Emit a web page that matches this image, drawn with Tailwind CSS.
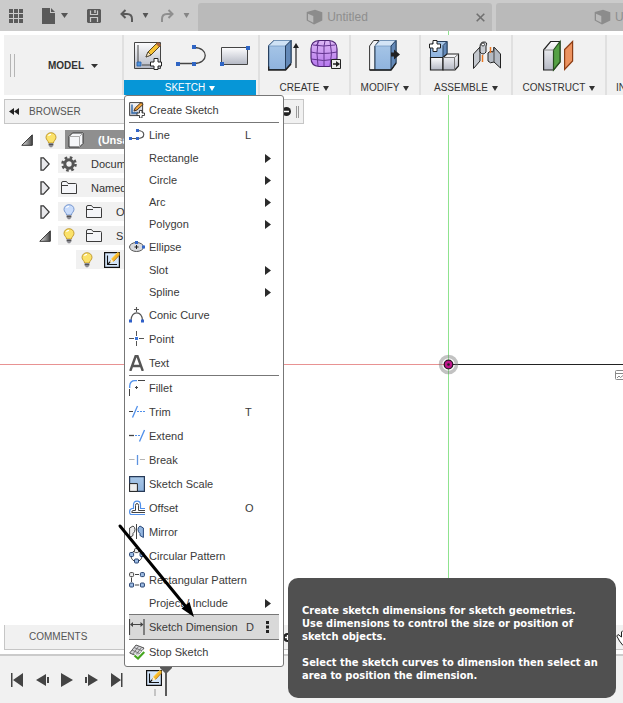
<!DOCTYPE html>
<html lang="en">
<head>
<meta charset="utf-8">
<title>Untitled</title>
<script src="https://cdn.jsdelivr.net/npm/@tailwindcss/browser@4"></script>
</head>
<body class="relative flex min-h-screen flex-col overflow-hidden bg-white font-['Liberation_Sans',Arial,sans-serif] text-[11px] leading-4 text-[#333]">

<!-- Shared symbols and gradients -->
<svg class="absolute size-0" aria-hidden="true">
  <defs>
    <linearGradient id="silver" x1="0" y1="0" x2="0" y2="1"><stop offset="0" stop-color="#fdfdfe"/><stop offset="1" stop-color="#b4b8c4"/></linearGradient>
    <linearGradient id="blue" x1="0" y1="0" x2="0" y2="1"><stop offset="0" stop-color="#a9c8e8"/><stop offset="1" stop-color="#8fb3de"/></linearGradient>
    <linearGradient id="purple" x1="0" y1="0" x2="0" y2="1"><stop offset="0" stop-color="#dcb6f4"/><stop offset="1" stop-color="#b678ee"/></linearGradient>
    <linearGradient id="dark" x1="0" y1="0" x2="1" y2="0"><stop offset="0" stop-color="#eee"/><stop offset="1" stop-color="#444"/></linearGradient>
    <symbol id="bulb" viewBox="0 0 12 16"><path d="M6 .7C3 .7 1 2.8 1 5.4c0 2.5 2.400 3.300 2.600 5.600h4.800C8.600 8.700 11 7.900 11 5.400 11 2.800 9 .7 6 .7z" fill="#fbe26a" stroke="#b58a1c" stroke-width=".8"/><path d="M3.500 3.800C4 2.700 5 2.300 6 2.300" stroke="#fff" stroke-width="1.300" fill="none"/><path d="M3.700 11h4.600v2.600L7 15.300H5L3.700 13.600z" fill="#8b8b92"/><path d="M3.700 12.500h4.600" stroke="#444" stroke-width=".8"/></symbol>
    <symbol id="bulb-off" viewBox="0 0 12 16"><path d="M6 .7C3 .7 1 2.800 1 5.400c0 2.500 2.400 3.300 2.600 5.600h4.800C8.600 8.700 11 7.900 11 5.400 11 2.800 9 .7 6 .7z" fill="#c9dcfb" stroke="#6d8fc9" stroke-width=".9"/><path d="M3.500 3.800C4 2.700 5 2.300 6 2.300" stroke="#fff" stroke-width="1.300" fill="none"/><path d="M3.700 11h4.600v2.600L7 15.300H5L3.700 13.600z" fill="#8b8b92"/><path d="M3.700 12.500h4.600" stroke="#444" stroke-width=".8"/></symbol>
    <symbol id="folder" viewBox="0 0 16 13"><path d="M.5 12.500V2Q.5 .5 2 .5h3.500L7 2.500h7.500q1 0 1 1v9z" fill="#f4f5f8" stroke="#3b3b3b"/><path d="M1 4.500h6" stroke="#3b3b3b"/></symbol>
    <symbol id="tabcube" viewBox="0 0 17 16"><path d="M.7 3 9 .7l7.300 2.600v8.200L8 15.500.7 11.500z" fill="#8c8c8c"/><path d="M2 4.700 7.300 7v6.700L2 11z" fill="#bababa"/></symbol>
    <symbol id="tri-right" viewBox="0 0 10 14"><path d="M1 .8h2.500L9.200 7l-5.700 6.200H1z" fill="#e9e9ec" stroke="#3a3a3a" stroke-width="1.300"/></symbol>
    <symbol id="tri-open" viewBox="0 0 12 12"><path d="M11.300.8v10.500H.8z" fill="url(#dark)" stroke="#333"/></symbol>
    <symbol id="mini-sketch" viewBox="0 0 16 16"><path d="M.6.600h14.800v14.800H.6z" fill="#d4e6fb" stroke="#111" stroke-width="1.200"/><path d="M3.500 3.500v9H13M3.500 12.500l4-4" fill="none" stroke="#111" stroke-width="1.100"/><path d="m6 10.500 1.300-3.500L13.500.5h2V3L9.500 9.500z" fill="#f7b92a"/><path d="m7.300 7 6.200-6.500" stroke="#fbdc7c"/><path d="M9.500 9.500 15.500 3" stroke="#a8701a" stroke-width=".8"/><path d="m6 10.500 1.300-3.500 2.200 2.500z" fill="#fff3d0"/></symbol>
    <symbol id="caret" viewBox="0 0 6 5"><path d="M0 0h6L3 5z" fill="currentColor"/></symbol>
    <symbol id="sub" viewBox="0 0 6 9"><path d="M0 0 6 4.500 0 9z" fill="#2b2b2b"/></symbol>
  </defs>
</svg>

<!-- Drawing canvas -->
<div class="absolute inset-x-0 top-[31px] bottom-[50px]" aria-hidden="true">
  <div class="absolute inset-y-0 left-[448px] w-px bg-[#8fe38f]"></div>
  <div class="absolute left-0 top-[333px] h-px w-[448px] bg-[#e89292]"></div>
  <div class="absolute left-[448px] right-0 top-[333px] h-px bg-[#222]"></div>
  <svg class="absolute left-[438px] top-[323px] size-[21px]" viewBox="0 0 21 21"><circle cx="10.500" cy="10.500" r="8" fill="none" stroke="#777" stroke-opacity=".45" stroke-width="3.500"/><circle cx="10.500" cy="10.500" r="4.300" fill="#c0168c" stroke="#2a1525" stroke-width="1.300"/><circle cx="10.500" cy="10.500" r="1.300" fill="#222"/></svg>
  <svg class="absolute right-0 top-[339px] h-[10px] w-[8px]" viewBox="0 0 8 10" fill="none" stroke="#888"><path d="M8 .5H1.500Q.5 .5 .5 1.500v7q0 1 1 1H8M1 3.500h7M2 8l2-2 1.500 1.500L8 5.500"/></svg>
</div>

<!-- Quick access bar and document tabs -->
<header class="relative flex h-[31px] shrink-0 items-end bg-[#cbcbcb] text-[#555]">
  <div class="flex h-full w-[198px] shrink-0 items-center pl-[9px]">
    <button aria-label="Data panel"><svg class="block h-[14px] w-[14px]" viewBox="0 0 14 14" fill="#5a5a5a"><path d="M0 0h4v4H0zM5 0h4v4H5zM10 0h4v4h-4zM0 5h4v4H0zM5 5h4v4H5zM10 5h4v4h-4zM0 10h4v4H0zM5 10h4v4H5zM10 10h4v4h-4z"/></svg></button>
    <button class="ml-[19px] flex items-center gap-[6px]" aria-label="File"><svg class="h-[16px] w-[13px]" viewBox="0 0 13 16" fill="#5a5a5a"><path d="M0 0h8v5h5v11H0zM9 0l4 4H9z"/></svg><svg class="h-[5px] w-[7px]" viewBox="0 0 6 5" preserveAspectRatio="none"><use href="#caret"/></svg></button>
    <button class="ml-[19px]" aria-label="Save"><svg class="block size-[14px]" viewBox="0 0 14 14"><path d="M1 0h12l1 1v12l-1 1H1l-1-1V1z" fill="#5a5a5a"/><path d="M3.500 1.500v4h7v-4M3.500 13V8.500h7V13" fill="none" stroke="#cbcbcb" stroke-width="1.200"/><path d="M8 1v3" stroke="#cbcbcb" stroke-width="1.500"/></svg></button>
    <button class="ml-[19px] flex items-center gap-[9px]" aria-label="Undo"><svg class="h-[14px] w-[13px]" viewBox="0 0 13 14" fill="none" stroke="#5a5a5a" stroke-width="2"><path d="M5.500 1 1.500 5l4 4M2 5h5q5 0 5 5v3"/></svg><svg class="h-[5px] w-[7px]" viewBox="0 0 6 5"><use href="#caret"/></svg></button>
    <button class="ml-[12px] flex items-center gap-[9px] text-[#858585]" aria-label="Redo"><svg class="h-[14px] w-[13px]" viewBox="0 0 13 14" fill="none" stroke="#8f8f8f" stroke-width="2"><path d="m7.500 1 4 4-4 4M11 5H6q-5 0-5 5v3"/></svg><svg class="h-[5px] w-[7px]" viewBox="0 0 6 5"><use href="#caret"/></svg></button>
  </div>
  <div class="relative flex h-[28px] w-[294px] shrink-0 items-center justify-center gap-1 rounded-t-[3px] bg-[#bababa] pr-4 text-[12px] text-[#8e8e8e]">
    <svg class="h-4 w-[17px]"><use href="#tabcube"/></svg><span>Untitled</span>
    <button class="absolute right-[7px]" aria-label="Close tab"><svg class="block size-[9px]" viewBox="0 0 9 9" stroke="#707070" stroke-width="1.600"><path d="m.7.7 7.600 7.600M8.300.7.7 8.300"/></svg></button>
  </div>
  <div class="ml-1 flex h-[28px] min-w-0 grow items-center gap-1 overflow-hidden rounded-tl-[3px] bg-[#bababa] pl-[98px] text-[12px] text-[#8e8e8e]">
    <svg class="h-4 w-[17px] shrink-0"><use href="#tabcube"/></svg><span>Untitled</span>
  </div>
</header>

<!-- Ribbon -->
<nav class="relative z-20 mt-1 ml-1 flex h-[60px] shrink-0 bg-[#f1f1f1] text-[10px]">
  <div class="flex w-[118px] shrink-0 items-center pl-[6px]">
    <div class="h-[23px] w-[5px] border-x border-[#b5b5b5]"></div>
    <button class="ml-[33px] flex items-center gap-[7px] pt-[2px] font-bold">MODEL <svg class="h-[4px] w-[7px]" viewBox="0 0 6 5" preserveAspectRatio="none"><use href="#caret"/></svg></button>
  </div>
  <div class="relative flex w-[136px] shrink-0 flex-col border-l-2 border-[#e0e0e0]">
    <div class="flex h-[45px] items-start gap-[12px] pt-[5px] pl-[9px]">
      <button aria-label="Create Sketch"><svg class="block h-[32px] w-[30px]" viewBox="133 40 30 32"><path d="M134.500 42.500h26v26h-26z" fill="url(#silver)" stroke="#444"/><path d="M138 45v17M142 65h9" stroke="#444"/><path d="M137 62h4v4h-4z" fill="#4f93da" stroke="#245ca8" stroke-width=".8"/><path d="m146 57 2-5 9.500-9.500 3 3L151 55z" fill="#f6c235" stroke="#4a3510" stroke-width=".9"/><path d="m146 57 2-5 3 3z" fill="#ffe9bd" stroke="#333" stroke-width=".7"/><path d="m156 44 1.500-1.500q3-.5 3 3L159 47z" fill="#a9643c"/><path d="M154 58.500h4v3.500h3.500v4H158v3.500h-4V66h-3.500v-4h3.500z" fill="#fff" stroke="#222"/></svg></button>
      <button aria-label="Line"><svg class="block h-[32px] w-[32px]" viewBox="175 40 32 32"><path d="M194 47.500c15 0 15 16 0 16h-16" fill="none" stroke="#444" stroke-width="1.300"/><path d="M176 62h4v4h-4zM192 62h4v4h-4zM192 45h4v4h-4z" fill="#2f65c4"/></svg></button>
      <button aria-label="Rectangle"><svg class="block h-[32px] w-[31px]" viewBox="218 40 31 32"><path d="M220.500 47.500h26v17h-26z" fill="url(#silver)" stroke="#444"/><path d="M245 46h4v4h-4zM219 62h4v4h-4z" fill="#2f65c4"/></svg></button>
    </div>
    <button class="flex h-[15px] w-[132px] items-center justify-center gap-1 bg-[#0696d7] pt-px text-white" aria-haspopup="menu" aria-expanded="true">SKETCH <svg class="h-[5px] w-[6px]"><use href="#caret"/></svg></button>

    <!-- Sketch menu -->
    <div role="menu" class="absolute top-[60px] left-0 w-[160px] rounded-[3px] border border-[#777] bg-white px-1 py-[2px] text-[11px] text-[#3a3a3a] [&>button]:flex [&>button]:w-full [&>button]:items-center [&>button]:gap-1 [&>button]:text-left [&_span]:grow [&_kbd]:w-[34px] [&_kbd]:font-['Liberation_Sans']">
      <button role="menuitem" class="h-6"><svg class="size-4" viewBox="0 0 16 16"><path d="M.6.6h13v13H.6z" fill="url(#silver)" stroke="#444"/><path d="M3 2.500V11h6" fill="none" stroke="#2e67a8" stroke-width="1.400"/><path d="m5 9 1.200-3L12 .5 14 2.500 8 8z" fill="#f2a53a" stroke="#3b2412" stroke-width=".9"/><path d="M10.500 8.500h2.500V11h2.500v2.500H13V16h-2.500v-2.500H8V11h2.500z" fill="#fff" stroke="#333" stroke-width=".9"/></svg><span>Create Sketch</span></button>
      <hr class="m-0 w-[150px] border-[#777]">
      <button role="menuitem" class="h-6"><svg class="size-4" viewBox="0 0 16 16"><path d="M8 3.500c9 0 9 8 0 8H2" fill="none" stroke="#555" stroke-width="1.200"/><path d="M0 10h3v3H0zM7 10h3v3H7zM7 2h3v3H7z" fill="#3366c8"/></svg><span>Line</span><kbd>L</kbd></button>
      <button role="menuitem" class="h-[22px] pl-5 pr-2"><span>Rectangle</span><svg class="h-[9px] w-[6px]"><use href="#sub"/></svg></button>
      <button role="menuitem" class="h-[22px] pl-5 pr-2"><span>Circle</span><svg class="h-[9px] w-[6px]"><use href="#sub"/></svg></button>
      <button role="menuitem" class="h-[22px] pl-5 pr-2"><span>Arc</span><svg class="h-[9px] w-[6px]"><use href="#sub"/></svg></button>
      <button role="menuitem" class="h-[22px] pl-5 pr-2"><span>Polygon</span><svg class="h-[9px] w-[6px]"><use href="#sub"/></svg></button>
      <button role="menuitem" class="h-6"><svg class="size-4" viewBox="0 0 16 16"><ellipse cx="7.500" cy="8" rx="7" ry="4.500" fill="#d9dade" stroke="#555"/><path d="M5.500 8h4M7.500 6v4" stroke="#222"/><path d="M6 2h3v3H6zM13 6.500h3v3h-3z" fill="#3366c8"/></svg><span>Ellipse</span></button>
      <button role="menuitem" class="h-[22px] pl-5 pr-2"><span>Slot</span><svg class="h-[9px] w-[6px]"><use href="#sub"/></svg></button>
      <button role="menuitem" class="h-[22px] pl-5 pr-2"><span>Spline</span><svg class="h-[9px] w-[6px]"><use href="#sub"/></svg></button>
      <button role="menuitem" class="h-6"><svg class="size-4" viewBox="0 0 16 16"><path d="M2 13C3 3.500 12.500 3.500 13.500 13M5 2.500h5M7.500 0v5" fill="none" stroke="#555" stroke-width="1.100"/><path d="M0 12.500h3v3H0zM12 12.500h3v3h-3z" fill="#2f5fc8"/></svg><span>Conic Curve</span></button>
      <button role="menuitem" class="h-6"><svg class="size-4" viewBox="0 0 16 16"><path d="M0 7.500h5M10 7.500h5M7.500 0v5M7.500 10v5" stroke="#555"/><path d="M6 6h3v3H6z" fill="#3b74d8"/></svg><span>Point</span></button>
      <button role="menuitem" class="h-6"><svg class="size-4" viewBox="0 0 16 16" fill="none" stroke="#555" stroke-width="2.400"><path d="M1.300 16 6.600 1.300h1.900L13.800 16M3.500 11h8"/></svg><span>Text</span></button>
      <hr class="m-0 w-[150px] border-[#777]">
      <button role="menuitem" class="h-6"><svg class="size-4" viewBox="0 0 16 16" fill="none"><path d="M.7 8V6Q1 .7 6 .7h2" stroke="#4f8fea" stroke-width="1.300"/><path d="M9 .5h7M.5 9v7" stroke="#444"/><path d="M6 7.500h3M7.500 6v3" stroke="#444"/></svg><span>Fillet</span></button>
      <button role="menuitem" class="h-6"><svg class="size-4" viewBox="0 0 16 16"><path d="M0 7.500h4" stroke="#444"/><path d="M3.500 13.500 8.500 2" stroke="#4f8fea" stroke-width="1.300"/><path d="M8 7.500h8" stroke="#4f8fea" stroke-dasharray="2 1"/></svg><span>Trim</span><kbd>T</kbd></button>
      <button role="menuitem" class="h-6"><svg class="size-4" viewBox="0 0 16 16"><path d="M0 7.500h5" stroke="#444" stroke-width="1.300"/><path d="M6 7.500h5" stroke="#4f8fea" stroke-dasharray="2 1"/><path d="M10.500 13.500 15.500 2" stroke="#4f8fea" stroke-width="1.300"/></svg><span>Extend</span></button>
      <button role="menuitem" class="h-6"><svg class="size-4" viewBox="0 0 16 16"><path d="M0 7.500h5.500M11 7.500h5" stroke="#b5b5b5"/><path d="M8.500 3v10" stroke="#5d93e0" stroke-width="1.300"/></svg><span>Break</span></button>
      <button role="menuitem" class="h-6"><svg class="size-4" viewBox="0 0 16 16"><path d="M.6.600h14.800v14.800H.6z" fill="url(#blue)" stroke="#263957" stroke-width="1.200"/><path d="M.6 7.600h7.800v7.800H.6z" fill="#eee" stroke="#222"/></svg><span>Sketch Scale</span></button>
      <button role="menuitem" class="h-6"><svg class="size-4" viewBox="0 0 16 16" fill="none"><path d="M16 14.500H2.500Q.6 14.500 .6 12 .6 9 3 8.500h1.500V5Q4.500 1.200 8 1.200T11.500 5v3.500H16" stroke="#4f8fea" stroke-width="1.200"/><path d="M16 10.500H9.500V5.500Q9.500 3.500 8 3.500T6.500 5.500v5H4Q2.800 10.500 2.800 12.500H16" stroke="#444"/></svg><span>Offset</span><kbd>O</kbd></button>
      <button role="menuitem" class="h-6"><svg class="size-4" viewBox="0 0 16 16"><path d="M.6 13.500V4L4 2q2 1 2 3.500T4 9.500v2z" fill="#eee" stroke="#444"/><path d="M14.400 13.500V4L11 2q-2 1-2 3.500t2 4v2z" fill="#94b6df" stroke="#28487a"/><path d="M7.500 0v15" stroke="#444"/></svg><span>Mirror</span></button>
      <button role="menuitem" class="h-6"><svg class="size-4" viewBox="0 0 16 16"><circle cx="7.500" cy="8" r="5.500" fill="none" stroke="#444"/><g stroke="#25406f"><rect x="5.500" y=".6" width="4" height="4" rx="1" fill="#eee" stroke="#444"/><rect x=".6" y="4.500" width="4" height="4" rx="1" fill="#9dbce4"/><rect x="11" y="4.500" width="4" height="4" rx="1" fill="#9dbce4"/><rect x="5.500" y="11" width="4" height="4" rx="1" fill="#9dbce4"/></g></svg><span>Circular Pattern</span></button>
      <button role="menuitem" class="h-6"><svg class="size-4" viewBox="0 0 16 16"><path d="M6 2.500h4M6 13h4M2.500 5.500v4.500" stroke="#444"/><g stroke="#25406f" fill="#9dbce4"><rect x=".6" y=".6" width="4" height="4" rx="1" fill="#eee" stroke="#444"/><rect x="11.400" y=".6" width="4" height="4" rx="1"/><rect x=".6" y="11" width="4" height="4" rx="1"/><rect x="11.400" y="11" width="4" height="4" rx="1"/></g></svg><span>Rectangular Pattern</span></button>
      <button role="menuitem" class="h-[22px] pl-5 pr-2"><span>Project / Include</span><svg class="h-[9px] w-[6px]"><use href="#sub"/></svg></button>
      <button role="menuitem" class="h-[26px] border-y border-[#777] bg-[#d9d9d9]"><svg class="size-4" viewBox="0 0 16 16"><path d="M.5 0v16M15 0v16" stroke="#444" stroke-width="1.200"/><path d="M2 5.500h12" stroke="#444"/><path d="M1 5.500 4 3v5zM14.500 5.500l-3-2.500v5z" fill="#444"/></svg><span>Sketch Dimension</span><b class="w-4 font-normal">D</b><svg class="mr-[10px] h-3 w-[3px]" viewBox="0 0 3 12" fill="#222"><path d="M0 0h3v3H0zM0 4.500h3v3H0zM0 9h3v3H0z"/></svg></button>
      <button role="menuitem" class="h-6"><svg class="size-4" viewBox="0 0 16 16"><path d="M.7 9 7 1l8 3-6 8.500z" fill="#d6d6da" stroke="#555"/><path d="m3 6 8.500 4M5 3.500l8.500 3.500M3.500 10.500l6-8M6.500 11.500l6-8" stroke="#666" stroke-width=".8"/><path d="m5.500 11 3.500 3.500L15.300 7" fill="none" stroke="#fff" stroke-width="3.500"/><path d="m5.500 11.500 3.500 3L15.300 8" fill="none" stroke="#45a51e" stroke-width="2.200"/></svg><span>Stop Sketch</span></button>
    </div>
  </div>
  <div class="flex w-[91px] shrink-0 flex-col items-center border-l-2 border-[#e0e0e0]">
    <div class="flex h-[45px] items-start gap-2 pt-[3px]">
      <button aria-label="Extrude"><svg class="block h-[34px] w-[34px]" viewBox="268 38 34 34"><path d="m268.600 46 5.500-5.500H291v22.500l-5.500 6.500h-16.900z" fill="url(#blue)" stroke="#27405f" stroke-width="1.200"/><path d="m268.600 46 5.500-5.500H291l-5.500 5.500z" fill="#cfe2f5" stroke="#6e93bb" stroke-width=".7"/><path d="M285.500 46 291 40.500v22.500l-5.500 6.500z" fill="#6389b8" stroke="#27405f"/><path d="M268.600 66.500v3.500h17l5.400-6" fill="none" stroke="#222" stroke-width="1.400"/><path d="M296 68V46" stroke="#222" stroke-width="1.200"/><path d="m293 48 3-5 3 5z" fill="#222"/></svg></button>
      <button aria-label="Create Form"><svg class="block h-[34px] w-[32px]" viewBox="310 38 32 34"><path d="M311 49q0-8 8-8.500h10q8 .5 8 8.500v9q0 8-8 8.500h-10q-8-.5-8-8.500z" fill="url(#purple)" stroke="#4d2474" stroke-width="1.200"/><path d="M318 41q-2 13 0 25M324 46v20M330 41q3 12 0 25M311 52q11 3 26 0M311 59q12 3 26 0M313 45q10 2 22 0M319 41l-3 5M325 41l-1 5" fill="none" stroke="#63348f"/><path d="M331.500 59.500h9v9h-9z" fill="#eee" stroke="#222"/><path d="M333 64h4" stroke="#222" stroke-width="1.500"/><path d="m336 61 4 3-4 3z" fill="#222"/></svg></button>
    </div>
    <button class="flex h-[15px] items-center gap-1 pt-px">CREATE <svg class="h-[5px] w-[6px]"><use href="#caret"/></svg></button>
  </div>
  <div class="flex w-[70px] shrink-0 flex-col items-center border-l-2 border-[#e0e0e0]">
    <button class="flex h-[45px] items-start pt-[3px]" aria-label="Press Pull"><svg class="block h-[34px] w-[34px]" viewBox="369 38 34 34"><path d="m370.600 46 4-5.500H380l-4 5.500v24h-5.400z" fill="#f2f3f5" stroke="#333"/><path d="m376 46 5-5.500h16V63l-5 7h-16z" fill="url(#blue)" stroke="#27405f"/><path d="m376 46 5-5.500h16l-5 5.500z" fill="#d3e4f6" stroke="#6e93bb" stroke-width=".7"/><path d="m392 46 5-5.500V63l-5 7z" fill="#6389b8" stroke="#27405f"/><path d="M370.600 70h21.500l5-7" fill="none" stroke="#222" stroke-width="1.300"/><path d="M392 52.500h3v-3l6 5-6 5v-3h-3z" fill="#222"/></svg></button>
    <button class="flex h-[15px] items-center gap-1 pt-px">MODIFY <svg class="h-[5px] w-[6px]"><use href="#caret"/></svg></button>
  </div>
  <div class="flex w-[92px] shrink-0 flex-col items-center border-l-2 border-[#e0e0e0]">
    <div class="flex h-[45px] items-start gap-3 pt-[3px]">
      <button aria-label="New Component"><svg class="block h-[34px] w-[31px]" viewBox="428 38 31 34"><path d="M429.500 45.500 433 41.500h13V53l-4 4.500h-12.500z" fill="url(#blue)" stroke="#27405f"/><path d="m442 45.500 4-4V54l-4 3.500z" fill="#6389b8" stroke="#27405f"/><path d="M429.500 57.500H442V70h-12.500z" fill="url(#silver)" stroke="#222" stroke-width="1.200"/><path d="m442 57.500 4-3.500h11.500v12l-3.500 4h-12z" fill="url(#silver)" stroke="#222" stroke-width="1.200"/><path d="M442 57.500h11.500l4-3.500M453.500 57.500V70" fill="none" stroke="#777"/><path d="M432 40.500h4V44h3.500v4H436v3.500h-4V48h-3.500v-4h3.500z" fill="#fff" stroke="#222"/></svg></button>
      <button aria-label="Joint"><svg class="block h-[34px] w-[31px]" viewBox="472 38 31 34"><path d="M473.500 54 480 47v14l-6.500 7.500z" fill="#c4c8ce" stroke="#222"/><path d="M480 47q0-5 4-5t2 4v6q-3 4-6 0z" fill="#c9cdd3" stroke="#222"/><circle cx="483" cy="44.500" r="1.500" fill="#fff" stroke="#222" stroke-width=".8"/><path d="M482.500 55v7" stroke="#e87722" stroke-width="1.500"/><path d="M488 53q2-3 5-1l1-5 6.500 7v14l-6.500-6q-4 2-6-1z" fill="#b4bac3" stroke="#222"/><path d="M494 47v15" stroke="#444"/><path d="M490.500 47v6" stroke="#e87722" stroke-width="1.500"/></svg></button>
    </div>
    <button class="flex h-[15px] items-center gap-1 pt-px">ASSEMBLE <svg class="h-[5px] w-[6px]"><use href="#caret"/></svg></button>
  </div>
  <div class="flex w-[94px] shrink-0 flex-col items-center border-l-2 border-[#e0e0e0]">
    <button class="flex h-[45px] items-start pt-[3px]" aria-label="Offset Plane"><svg class="block h-[34px] w-[32px]" viewBox="543 38 32 34"><path d="m543.600 50 7-8.500H560V62l-6.500 8h-9.900z" fill="url(#silver)" stroke="#222" stroke-width="1.200"/><path d="m553.500 50 6.500-8.500V62l-6.500 8z" fill="#55a145" stroke="#264f1e" stroke-width="1.200"/><path d="M543.600 50h9.900" stroke="#888"/><path d="m564.600 49.500 8-8V61l-8 8.500z" fill="#ec9360" stroke="#8c3c14" stroke-width="1.200"/></svg></button>
    <button class="flex h-[15px] items-center gap-1 pt-px">CONSTRUCT <svg class="h-[5px] w-[6px]"><use href="#caret"/></svg></button>
  </div>
  <div class="flex min-w-0 grow flex-col overflow-hidden border-l-2 border-[#e0e0e0] pl-[9px]">
    <div class="h-[45px]"></div>
    <button class="flex h-[15px] items-center pt-px">INSPECT</button>
  </div>
</nav>

<!-- Browser panel -->
<main class="relative mt-1 grow pl-1">
  <div class="flex h-[25px] w-[300px] items-center border border-[#c6c6c6] bg-[#f1f1f1] px-1 text-[10px] text-[#555]">
    <svg class="h-[7px] w-[10px]" viewBox="0 0 10 7" fill="#222"><path d="M5 0v7L0 3.500zM10 0v7L5 3.500z"/></svg>
    <h2 class="ml-[10px] grow">BROWSER</h2>
    <svg class="mr-[5px] size-[9px]" viewBox="0 0 9 9"><circle cx="4.500" cy="4.500" r="4.500" fill="#222"/><path d="M2 4.500h5" stroke="#fff" stroke-width="1.500"/></svg>
    <div class="h-3 w-[3px] border-x border-[#999]"></div>
  </div>
  <ul class="mt-[6px] flex w-[121px] flex-col gap-[5px] whitespace-nowrap [&_svg]:shrink-0 [&>li]:flex [&>li]:h-[19px] [&>li]:items-center [&_div]:flex [&_div]:h-full [&_div]:min-w-0 [&_div]:grow [&_div]:items-center [&_div]:bg-[#f1f1f1]">
    <li class="pl-[17px]"><svg class="mr-[7px] size-3"><use href="#tri-open"/></svg><div class="pl-[5px]"><svg class="mr-[8px] h-4 w-3"><use href="#bulb"/></svg><div class="!bg-[#8f8f8f] pl-[3px] font-bold text-white"><svg class="mr-[14px] size-4" viewBox="0 0 16 16"><path d="M1 4.500 4.500 1H15v10.500L11.500 15H1z" fill="#f5f6f8" stroke="#333" stroke-linejoin="round"/><path d="M1 4.500h10.500L15 1M11.500 4.500V15" fill="none" stroke="#aaa"/></svg>(Unsa</div></div></li>
    <li class="pl-9"><svg class="mr-2 h-[14px] w-[10px]"><use href="#tri-right"/></svg><div class="pl-[3px]"><svg class="mr-[14px] size-4" viewBox="0 0 16 16"><circle cx="8" cy="8" r="4.200" fill="none" stroke="#555" stroke-width="3"/><circle cx="8" cy="8" r="6.500" fill="none" stroke="#555" stroke-width="2.600" stroke-dasharray="2.600 2.500"/></svg>Docum</div></li>
    <li class="pl-9"><svg class="mr-2 h-[14px] w-[10px]"><use href="#tri-right"/></svg><div class="pl-[3px]"><svg class="mr-[14px] h-[13px] w-4"><use href="#folder"/></svg>Named</div></li>
    <li class="pl-9"><svg class="mr-2 h-[14px] w-[10px]"><use href="#tri-right"/></svg><div class="pl-[5px]"><svg class="mr-[11px] h-4 w-3"><use href="#bulb-off"/></svg><svg class="mr-[14px] h-[13px] w-4"><use href="#folder"/></svg>O</div></li>
    <li class="pl-[35px]"><svg class="mr-[7px] size-3"><use href="#tri-open"/></svg><div class="pl-[5px]"><svg class="mr-[11px] h-4 w-3"><use href="#bulb"/></svg><svg class="mr-[14px] h-[13px] w-4"><use href="#folder"/></svg>S</div></li>
    <li class="pl-[72px]"><div class="pl-[5px]"><svg class="mr-[11px] h-4 w-3"><use href="#bulb"/></svg><svg class="size-4"><use href="#mini-sketch"/></svg></div></li>
  </ul>
</main>

<!-- Comments and navigation bars -->
<div class="relative flex h-[25px] shrink-0 justify-between pl-1 text-[10px] text-[#555]">
  <div class="flex w-[300px] items-center border-b border-l border-[#c6c6c6] bg-[#f1f1f1] pl-6">
    <h2 class="grow">COMMENTS</h2>
    <svg class="mr-[12px] size-[9px]" viewBox="0 0 9 9"><circle cx="4.500" cy="4.500" r="4.500" fill="#222"/><path d="M2 4.500h5M4.500 2v5" stroke="#fff" stroke-width="1.300"/></svg>
  </div>
  <div class="flex w-[200px] items-center justify-end border-b border-[#c6c6c6] bg-[#f1f1f1]">
    <svg class="h-[17px] w-[7px]" viewBox="0 0 7 17" fill="#fff" stroke="#222"><path d="M7 1.500 5.500 3v5L2 5.500 .8 7 3.500 12l3.500 4.500"/></svg>
  </div>
</div>

<!-- Timeline -->
<footer class="relative mt-1 flex h-[49px] shrink-0 items-center border-t-2 border-[#cbcbcb] bg-[#f1f1f1] pl-[11px]">
  <div class="flex items-center gap-3 text-[#444]">
    <button aria-label="Go to beginning"><svg class="block h-[14px] w-[13px]" viewBox="0 0 13 14" fill="#444"><path d="M0 0h1.500v14H0zM12 0v14L2 7z"/></svg></button>
    <button aria-label="Step back"><svg class="block h-[14px] w-[13px]" viewBox="0 0 13 14" fill="#444"><path d="M10 1v12L0 7zM11 4h2v6h-2z"/></svg></button>
    <button aria-label="Play"><svg class="block h-[14px] w-[12px]" viewBox="0 0 12 14" fill="#444"><path d="m0 0 12 7-12 7z"/></svg></button>
    <button aria-label="Step forward"><svg class="block h-[14px] w-[13px]" viewBox="0 0 13 14" fill="#444"><path d="m3 1 10 6-10 6zM0 4h2v6H0z"/></svg></button>
    <button aria-label="Go to end"><svg class="block h-[14px] w-[13px]" viewBox="0 0 13 14" fill="#444"><path d="m1 0 10 7-10 7zM11 0h1.500v14H11z"/></svg></button>
  </div>
  <svg class="ml-[22px] h-8 w-[28px]" viewBox="145 665 28 32"><use href="#mini-sketch" x="146" y="671" width="16" height="16"/><path d="M154 690h2v7h-2z" fill="#c4c4c4"/><path d="M160 665h12v4l-5 5v23h-2v-23l-5-5z" fill="#5a5a5a"/></svg>
</footer>

<!-- Command tooltip -->
<div role="tooltip" class="absolute right-[7px] bottom-[5px] z-30 w-[328px] rounded-[10px] bg-[#505050] px-[14px] pt-[26px] pb-4 font-['DejaVu_Sans_Condensed','DejaVu_Sans',sans-serif] text-[11px] leading-[13px] font-bold text-white">
  <p>Create sketch dimensions for sketch geometries.<br>Use dimensions to control the size or position of<br>sketch objects.</p>
  <p class="mt-[13px]">Select the sketch curves to dimension then select an<br>area to position the dimension.</p>
</div>

<!-- Pointer arrow -->
<svg class="absolute top-[522px] left-[116px] z-40 h-[98px] w-[82px]" viewBox="116 522 82 98" aria-hidden="true"><path d="M120 526 187 608" stroke="#000" stroke-width="3" stroke-linecap="round"/><path d="M194 617 181.500 608.500 189.500 602z" fill="#000"/></svg>
</body>
</html>
